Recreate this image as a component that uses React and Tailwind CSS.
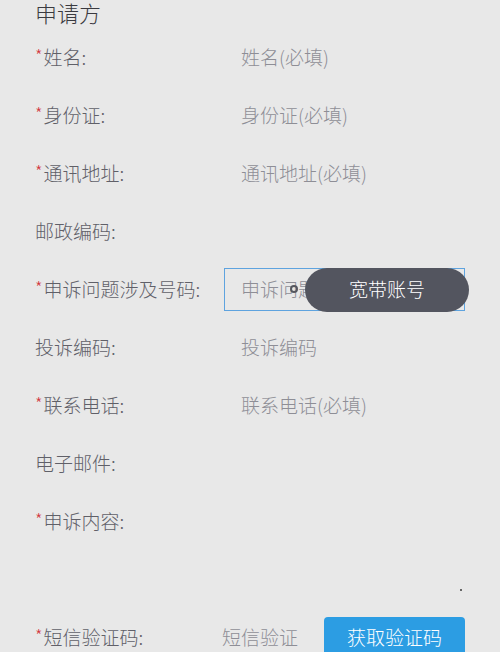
import React from "react";

const font = { fontFamily: '"Noto Sans CJK SC", "Noto Sans", sans-serif' };

const Row = ({ label, required, placeholder, children }) => (
  <div className="h-[58px] flex items-center">
    <div className="w-[206px] flex items-center text-[19px] text-[#606068] shrink-0">
      {required && <span className="text-[#d2343c] text-[17px] -mt-[4px] mr-[1px]">*</span>}
      <span>{label}</span>
    </div>
    {children ? (
      children
    ) : (
      <div className="text-[19px] text-[#8e8e96]">{placeholder}</div>
    )}
  </div>
);

const App = () => {
  return (
    <div className="w-[500px] h-[652px] overflow-hidden bg-[#e8e8e8] px-[35px] font-light" style={font}>
      <div className="h-[28px] -mt-[2px] mb-[2px] leading-[28px] text-[22px] text-[#3a3a40]">申请方</div>

      <Row required label="姓名:" placeholder="姓名(必填)" />
      <Row required label="身份证:" placeholder="身份证(必填)" />
      <Row required label="通讯地址:" placeholder="通讯地址(必填)" />
      <Row label="邮政编码:" />
      <Row required label="申诉问题涉及号码:">
        <div className="relative -ml-[17px] w-[241px] h-[43px] border-[1.5px] border-[#5ea3df] flex items-center pl-[16px] text-[19px] text-[#8e8e96]">
          申诉问题涉及号码(必填)
          <div className="absolute left-[65px] top-[16px] w-[8px] h-[8px] rounded-full border-[2px] border-[#55575f]" />
          <div className="absolute left-[80px] -top-[1px] w-[164px] h-[44px] rounded-full bg-[#53555f] flex items-center justify-center text-white text-[19px]">
            宽带账号
          </div>
        </div>
      </Row>
      <Row label="投诉编码:" placeholder="投诉编码" />
      <Row required label="联系电话:" placeholder="联系电话(必填)" />
      <Row label="电子邮件:" />
      <Row required label="申诉内容:" />

      <div className="h-[67px] relative">
        <div className="absolute left-[425px] top-[39px] w-[2px] h-[2px] bg-[#666]" />
      </div>

      <div className="flex items-start">
        <div className="w-[187px] h-[40px] flex items-center text-[19px] text-[#606068] shrink-0">
          <span className="text-[#d2343c] text-[17px] -mt-[4px] mr-[1px]">*</span>
          <span>短信验证码:</span>
        </div>
        <div className="w-[102px] h-[40px] flex items-center text-[19px] text-[#8e8e96]">短信验证</div>
        <button className="w-[141px] h-[44px] rounded-[4px] bg-[#2c9de3] text-white text-[19px] pb-[4px]">
          获取验证码
        </button>
      </div>
    </div>
  );
};

export default App;
